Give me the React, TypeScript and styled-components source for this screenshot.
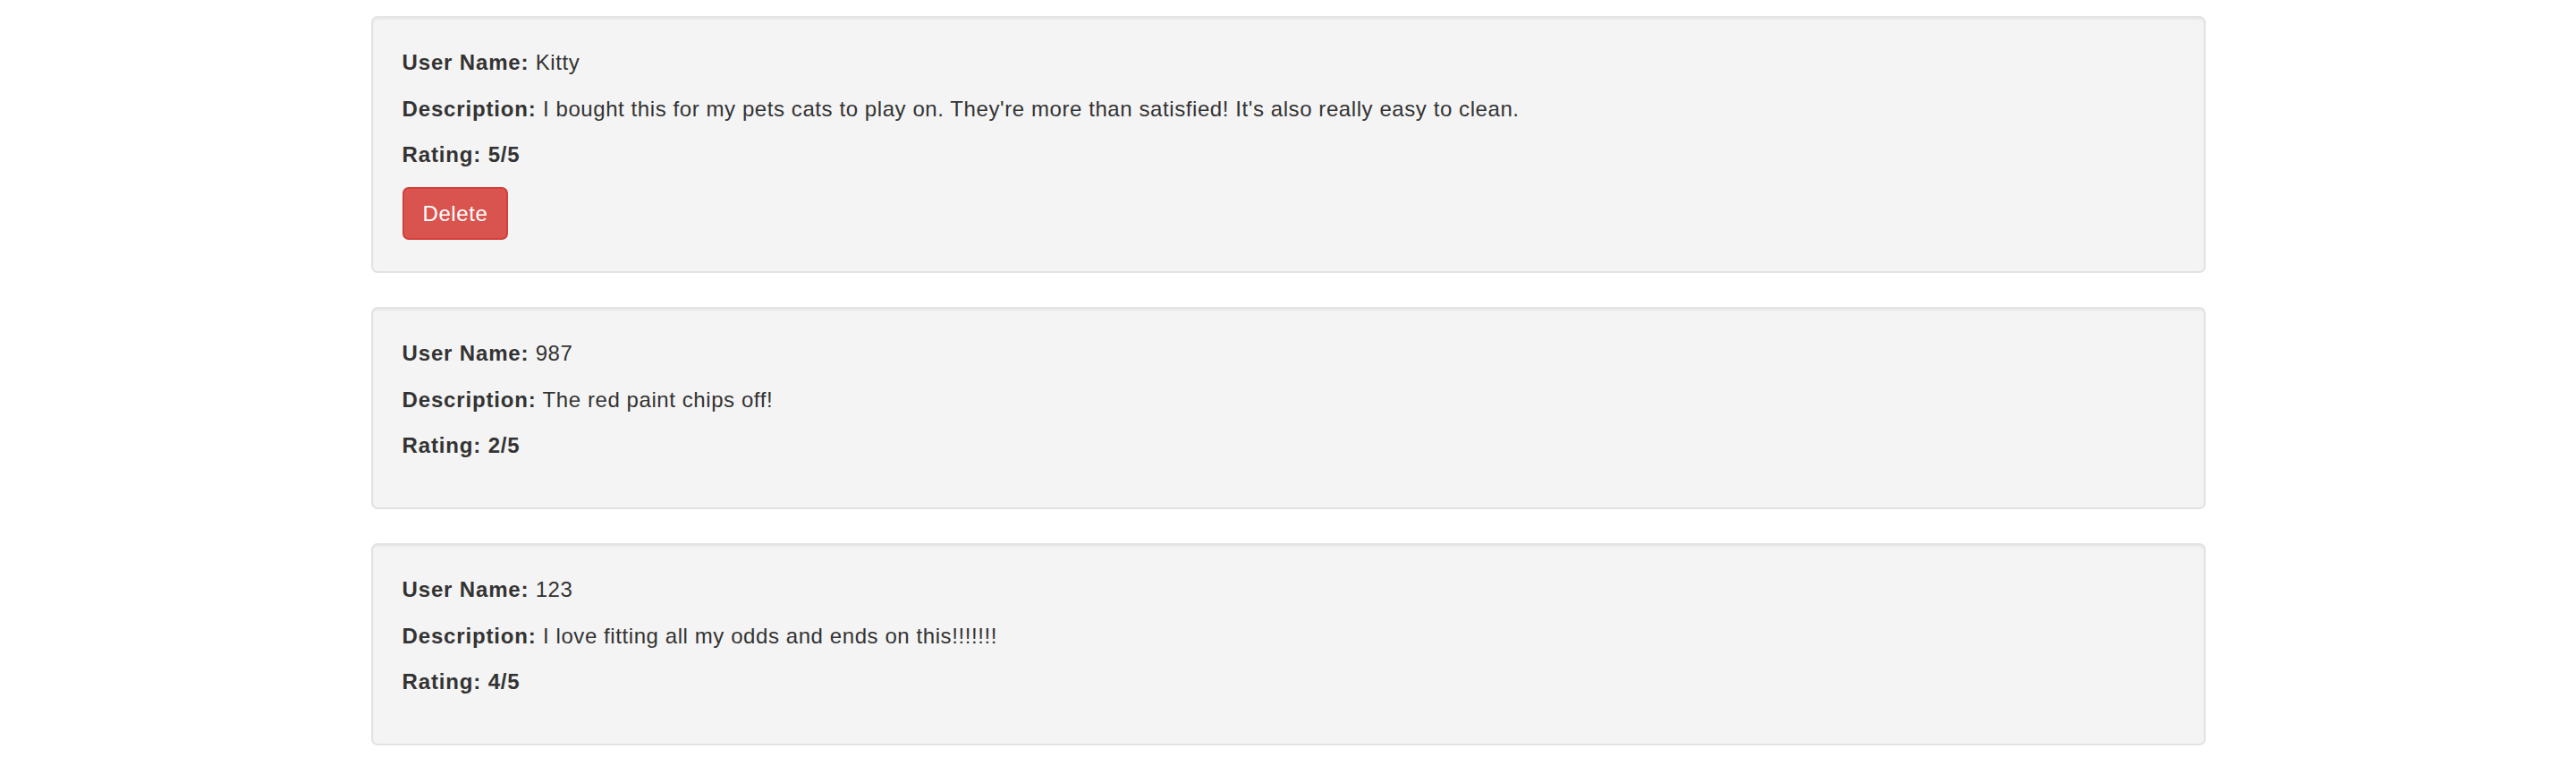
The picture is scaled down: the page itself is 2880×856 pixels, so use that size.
import React from "react";
import styled, { createGlobalStyle } from "styled-components";

const GlobalStyle = createGlobalStyle`
  html, body {
    margin: 0;
    padding: 0;
    background: #ffffff;
  }
  body {
    font-family: "Liberation Sans", Arial, Helvetica, sans-serif;
    font-size: 24px;
    line-height: 34.3px;
    letter-spacing: 0.58px;
    color: #333333;
  }
`;

const Page = styled.main`
  padding-top: 18px;
  display: flex;
  justify-content: center;
`;

const List = styled.section`
  width: 2051px;
  display: flex;
  flex-direction: column;
  gap: 38px;
`;

const Well = styled.article`
  box-sizing: border-box;
  background: #f4f4f4;
  border: 2px solid #e3e3e3;
  border-radius: 7px;
  padding: 33px 33px 34px;
  box-shadow: inset 0 2px 2px rgba(0, 0, 0, 0.05);
`;

const Line = styled.p<{ $bold?: boolean }>`
  margin: 0 0 17.3px;
  font-weight: ${(p) => (p.$bold ? 700 : 400)};
  letter-spacing: ${(p) => (p.$bold ? "0.85px" : "0.58px")};
`;

const Label = styled.strong`
  font-weight: 700;
  letter-spacing: 0.85px;
`;

const DeleteButton = styled.button`
  display: inline-block;
  margin: 1.5px 0 1px;
  padding: 10.3px 21px;
  font-family: "Liberation Sans", Arial, Helvetica, sans-serif;
  font-size: 24px;
  line-height: 34.3px;
  letter-spacing: 0.58px;
  color: #ffffff;
  background: #d9534f;
  border: 2px solid #d43f3a;
  border-radius: 7px;
  cursor: pointer;
`;

type Review = {
  user: string;
  description: string;
  rating: number;
  canDelete?: boolean;
};

const reviews: Review[] = [
  {
    user: "Kitty",
    description:
      "I bought this for my pets cats to play on. They're more than satisfied! It's also really easy to clean.",
    rating: 5,
    canDelete: true,
  },
  { user: "987", description: "The red paint chips off!", rating: 2 },
  {
    user: "123",
    description: "I love fitting all my odds and ends on this!!!!!!!",
    rating: 4,
  },
];

export default function App() {
  return (
    <>
      <GlobalStyle />
      <Page>
        <List>
          {reviews.map((r, i) => (
            <Well key={i}>
              <Line>
                <Label>User Name:</Label> {r.user}
              </Line>
              <Line>
                <Label>Description:</Label> {r.description}
              </Line>
              <Line $bold>Rating: {r.rating}/5</Line>
              {r.canDelete && <DeleteButton type="button">Delete</DeleteButton>}
            </Well>
          ))}
        </List>
      </Page>
    </>
  );
}
